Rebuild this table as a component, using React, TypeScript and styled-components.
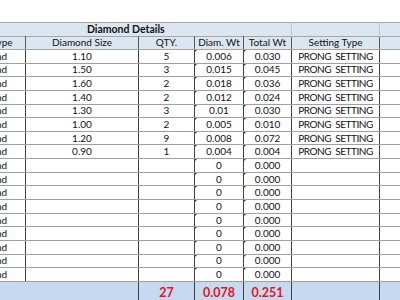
import styled, { createGlobalStyle } from 'styled-components';

type Row = {
  shape: string;
  size: string;
  qty: string;
  diamWt: string;
  totalWt: string;
  setting: string;
};

const filled: Row[] = [
  { shape: 'Round', size: '1.10', qty: '5', diamWt: '0.006', totalWt: '0.030', setting: 'PRONG SETTING' },
  { shape: 'Round', size: '1.50', qty: '3', diamWt: '0.015', totalWt: '0.045', setting: 'PRONG SETTING' },
  { shape: 'Round', size: '1.60', qty: '2', diamWt: '0.018', totalWt: '0.036', setting: 'PRONG SETTING' },
  { shape: 'Round', size: '1.40', qty: '2', diamWt: '0.012', totalWt: '0.024', setting: 'PRONG SETTING' },
  { shape: 'Round', size: '1.30', qty: '3', diamWt: '0.01', totalWt: '0.030', setting: 'PRONG SETTING' },
  { shape: 'Round', size: '1.00', qty: '2', diamWt: '0.005', totalWt: '0.010', setting: 'PRONG SETTING' },
  { shape: 'Round', size: '1.20', qty: '9', diamWt: '0.008', totalWt: '0.072', setting: 'PRONG SETTING' },
  { shape: 'Round', size: '0.90', qty: '1', diamWt: '0.004', totalWt: '0.004', setting: 'PRONG SETTING' },
];

const empty: Row[] = Array.from({ length: 9 }, () => ({
  shape: 'Round',
  size: '',
  qty: '',
  diamWt: '0',
  totalWt: '0.000',
  setting: '',
}));

const rows = [...filled, ...empty];

export default function App() {
  return (
    <>
      <GlobalStyle />
      <Sheet>
        <Table>
          <colgroup>
            <col style={{ width: 65 }} />
            <col style={{ width: 113 }} />
            <col style={{ width: 56 }} />
            <col style={{ width: 49 }} />
            <col style={{ width: 48 }} />
            <col style={{ width: 88 }} />
            <col style={{ width: 60 }} />
          </colgroup>
          <thead>
            <tr>
              <GroupCell colSpan={5}>Diamond Details</GroupCell>
              <GroupCell />
              <GroupCell />
            </tr>
            <tr>
              <HeadCell>Cut Type</HeadCell>
              <HeadCell>Diamond Size</HeadCell>
              <HeadCell>QTY.</HeadCell>
              <HeadCell>Diam. Wt</HeadCell>
              <HeadCell>Total Wt</HeadCell>
              <HeadCell>Setting Type</HeadCell>
              <HeadCell />
            </tr>
          </thead>
          <tbody>
            {rows.map((r, i) => (
              <tr key={`row-${i}`}>
                <Cell>{r.shape}</Cell>
                <Cell>{r.size}</Cell>
                <Cell>{r.qty}</Cell>
                <Cell $flag>{r.diamWt}</Cell>
                <Cell $flag>{r.totalWt}</Cell>
                <Cell $caps>{r.setting}</Cell>
                <Cell />
              </tr>
            ))}
            <tr>
              <TotalCell colSpan={2} />
              <TotalCell>27</TotalCell>
              <TotalCell>0.078</TotalCell>
              <TotalCell>0.251</TotalCell>
              <TotalCell />
              <TotalCell />
            </tr>
          </tbody>
        </Table>
      </Sheet>
    </>
  );
}

const GlobalStyle = createGlobalStyle`
  body {
    margin: 0;
    background: #ffffff;
    font-family: Lato, "Liberation Sans", sans-serif;
  }
`;

const Sheet = styled.div`
  width: 400px;
  height: 300px;
  overflow: hidden;
  padding-top: 22px;
  box-sizing: border-box;
`;

const Table = styled.table`
  margin-left: -40px;
  width: 479px;
  table-layout: fixed;
  border-collapse: collapse;
  font-size: 10px;
  color: #111;
`;

const GroupCell = styled.th`
  padding: 0;
  height: 12.5px;
  line-height: 11px;
  background: #dce6f1;
  border-top: 1px solid #a6a6a6;
  border-right: 1px solid #c0c8d4;
  font-size: 10.5px;
  font-weight: 700;
  text-align: center;
`;

const HeadCell = styled.th`
  padding: 0;
  height: 12.5px;
  line-height: 11px;
  background: #dce6f1;
  border-top: 1px solid #a6a6a6;
  border-bottom: 1px solid #a6a6a6;
  border-left: 1px solid #5a5a5a;
  border-right: 1px solid #5a5a5a;
  font-weight: 400;
  text-align: center;
  white-space: nowrap;
  overflow: hidden;
`;

const Cell = styled.td<{ $flag?: boolean; $caps?: boolean }>`
  position: relative;
  padding: 0;
  height: 12.65px;
  line-height: 11px;
  text-align: center;
  white-space: nowrap;
  letter-spacing: ${({ $caps }) => ($caps ? '-0.45px' : '0')};
  word-spacing: ${({ $caps }) => ($caps ? '2px' : '0')};
  border-bottom: 1px solid #a0a0a0;
  border-left: 1px solid #404040;
  border-right: 1px solid #404040;

  &::before {
    content: '';
    display: ${({ $flag }) => ($flag ? 'block' : 'none')};
    position: absolute;
    left: 0;
    top: 0;
    border-top: 2px solid #2f4a35;
    border-right: 2px solid transparent;
  }
`;

const TotalCell = styled.td`
  padding: 0;
  height: 19px;
  line-height: 16px;
  background: #c5d9f1;
  border-left: 1px solid #404040;
  border-right: 1px solid #404040;
  color: #e3141e;
  font-size: 12.5px;
  font-weight: 700;
  text-align: center;
  vertical-align: top;
  padding-top: 3px;
`;
